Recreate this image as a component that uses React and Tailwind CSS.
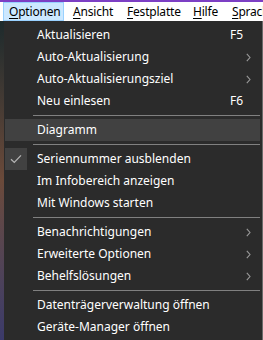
import { Fragment } from "react";

const menuBar = [
    { label: "Optionen", key: "O", w: "w-[61px]", active: true },
    { label: "Ansicht", key: "A", w: "w-[54px] ml-[3px]" },
    { label: "Festplatte", key: "F", w: "w-[66px]" },
    { label: "Hilfe", key: "H", w: "w-[39px]" },
    { label: "Sprache", key: "S", w: "w-[60px]" },
];

const groups = [
    [
        { label: "Aktualisieren", shortcut: "F5" },
        { label: "Auto-Aktualisierung", sub: true },
        { label: "Auto-Aktualisierungsziel", sub: true },
        { label: "Neu einlesen", shortcut: "F6" },
    ],
    [{ label: "Diagramm", hover: true }],
    [
        { label: "Seriennummer ausblenden", checked: true },
        { label: "Im Infobereich anzeigen" },
        { label: "Mit Windows starten" },
    ],
    [
        { label: "Benachrichtigungen", sub: true },
        { label: "Erweiterte Optionen", sub: true },
        { label: "Behelfslösungen", sub: true },
    ],
    [
        { label: "Datenträgerverwaltung öffnen" },
        { label: "Geräte-Manager öffnen" },
    ],
];

function Chevron() {
    return (
        <svg width="5" height="9" viewBox="0 0 5 9" className="text-[#9a9a9a]">
            <path d="M0.8 0.8 L4 4.5 L0.8 8.2" fill="none" stroke="currentColor" strokeWidth="1.1" />
        </svg>
    );
}

function Check() {
    return (
        <svg width="12" height="10" viewBox="0 0 12 10" className="text-[#b4b4b4]">
            <path d="M1 5.2 L4.3 8.4 L11 1.4" fill="none" stroke="currentColor" strokeWidth="1.3" />
        </svg>
    );
}

function MenuItem({ item }) {
    return (
        <div
            className={`h-[22px] flex items-center ml-[1px] mr-[2px] ${
                item.hover ? "bg-[#414141]" : ""
            }`}
        >
            <div
                className={`w-[22px] h-[22px] flex items-center justify-center shrink-0 ${
                    item.checked ? "bg-[#414141]" : ""
                }`}
            >
                {item.checked && <Check />}
            </div>
            <span className="ml-[10px] flex-1 text-white">{item.label}</span>
            {item.shortcut && <span className="text-white mr-[17px]">{item.shortcut}</span>}
            {item.sub && (
                <span className="mr-[9px] flex items-center">
                    <Chevron />
                </span>
            )}
        </div>
    );
}

export default function App() {
    return (
        <div
            className="w-[263px] h-[340px] overflow-hidden bg-[#2b2b2b] text-[12px] flex flex-col"
            style={{ fontFamily: '"Noto Sans", "Open Sans", sans-serif' }}
        >
            {/* title accent */}
            <div className="h-[2px] bg-[#7c3fc4] shrink-0" />

            {/* Menu bar */}
            <div className="h-[19px] bg-white flex items-stretch pl-[3px] shrink-0 whitespace-nowrap overflow-hidden">
                {menuBar.map((m) => (
                    <div
                        key={m.label}
                        className={`${m.w} shrink-0 flex items-center pl-[5px] text-black border tracking-[-0.2px] ${
                            m.active ? "bg-[#cce8ff] border-[#99d1ff]" : "border-transparent"
                        }`}
                    >
                        <span className="underline underline-offset-2">{m.key}</span>
                        {m.label.slice(1)}
                    </div>
                ))}
            </div>

            <div className="flex flex-1 min-h-0">
                {/* desktop peeking on the left */}
                <div className="w-[4px] shrink-0 bg-gradient-to-b from-[#1d2a2c] via-[#6b4a3a] to-[#3b3a6a]" />

                {/* Dropdown */}
                <div className="flex-1 bg-[#2b2b2b] border-r border-[#6a6a6a] pt-[3px]">
                    {groups.map((g, gi) => (
                        <Fragment key={gi}>
                            {gi > 0 && (
                                <div className="h-[7px] flex items-center pl-[29px] pr-[2px]">
                                    <div className="h-[1px] w-full bg-[#808080]" />
                                </div>
                            )}
                            {g.map((item) => (
                                <MenuItem key={item.label} item={item} />
                            ))}
                        </Fragment>
                    ))}
                </div>
            </div>
        </div>
    );
}
